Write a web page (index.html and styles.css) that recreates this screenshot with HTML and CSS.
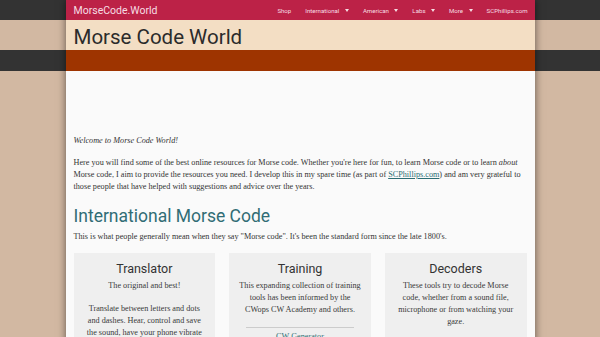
FILE: index.html
```html
<!DOCTYPE html>
<html lang="en">
<head>
    <meta charset="UTF-8">
    <meta name="viewport" content="width=device-width, initial-scale=1.0">
    <title>Morse Code World</title>
    <link rel="stylesheet" href="styles.css">
</head>
<body>

    <div class="page">
        <!-- Top navigation -->
        <nav class="topnav">
            <a class="brand" href="#">MorseCode.World</a>
            <ul class="menu">
                <li><a href="#">Shop</a></li>
                <li><a href="#">International <span class="caret"></span></a></li>
                <li><a href="#">American <span class="caret"></span></a></li>
                <li><a href="#">Labs <span class="caret"></span></a></li>
                <li><a href="#">More <span class="caret"></span></a></li>
                <li><a href="#">SCPhillips.com</a></li>
            </ul>
        </nav>

        <!-- Site title -->
        <header class="masthead">
            <h1>Morse Code World</h1>
        </header>
        <div class="stripe"></div>

        <!-- Main content -->
        <main class="content">
            <div class="ad-space"></div>

            <p><em>Welcome to Morse Code World!</em></p>
            <p>Here you will find some of the best online resources for Morse code. Whether you're here for fun, to learn Morse code or to learn <em>about</em> Morse code, I aim to provide the resources you need. I develop this in my spare time (as part of <a href="#">SCPhillips.com</a>) and am very grateful to those people that have helped with suggestions and advice over the years.</p>

            <h2>International Morse Code</h2>
            <p>This is what people generally mean when they say "Morse code". It's been the standard form since the late 1800's.</p>

            <div class="cards">
                <div class="card">
                    <h3>Translator</h3>
                    <p>The original and best!</p>
                    <p>Translate between letters and dots and dashes. Hear, control and save the sound, have your phone vibrate or your screen flash.</p>
                </div>
                <div class="card">
                    <h3>Training</h3>
                    <p>This expanding collection of training tools has been informed by the CWops CW Academy and others.</p>
                    <hr>
                    <a href="#">CW Generator</a>
                </div>
                <div class="card">
                    <h3>Decoders</h3>
                    <p>These tools try to decode Morse code, whether from a sound file, microphone or from watching your gaze.</p>
                </div>
            </div>
        </main>
    </div>

</body>
</html>
```

FILE: styles.css
```css
/* General Styles */
body, html {
    margin: 0;
    padding: 0;
}

body {
    font-family: "Liberation Serif", "Times New Roman", serif;
    color: #333;
    background: linear-gradient(#333 0, #333 20px, #d2b8a2 20px, #d2b8a2 50px, #333 50px, #333 71px, #d2b8a2 71px);
    overflow: hidden;
}

.page {
    width: 469px;
    margin: 0 auto;
    box-shadow: 0 0 8px rgba(0, 0, 0, 0.55);
}

/* Nav bar */
.topnav {
    height: 20px;
    background: #bc2247;
    display: flex;
    align-items: center;
    justify-content: space-between;
    padding: 0 7px 0 8px;
    font-family: Roboto, sans-serif;
}

.topnav a {
    color: #f6dde3;
    text-decoration: none;
}

.brand {
    font-size: 10.5px;
}

.menu {
    display: flex;
    gap: 14px;
    list-style: none;
    margin: 0;
    padding: 0;
    font-size: 6.1px;
}

.caret {
    display: inline-block;
    width: 0;
    height: 0;
    margin-left: 4px;
    vertical-align: 1px;
    border-left: 2.5px solid transparent;
    border-right: 2.5px solid transparent;
    border-top: 3px solid #f6dde3;
}

/* Title band */
.masthead {
    height: 30px;
    background: #f3dec4;
    padding: 3px 8px 0;
    box-sizing: border-box;
    display: flex;
    align-items: center;
}

.masthead h1 {
    margin: 0;
    font-family: Roboto, sans-serif;
    font-weight: 400;
    font-size: 20.5px;
    color: #2b2b2b;
}

.stripe {
    height: 21px;
    background: #9e3400;
}

/* Content */
.content {
    background: #fafafa;
    padding: 0 8px 30px;
    font-size: 8.2px;
    line-height: 12px;
}

.ad-space {
    height: 64px;
}

.content p {
    margin: 0 0 10px;
}

.content a {
    color: #2d6e74;
}

.content h2 {
    margin: 12px 0 4px;
    font-family: Roboto, sans-serif;
    font-weight: 400;
    font-size: 17.5px;
    line-height: 22px;
    color: #316d75;
}

.cards {
    display: grid;
    grid-template-columns: repeat(3, 1fr);
    gap: 14px;
}

.card {
    background: #efefef;
    text-align: center;
    padding: 8px 9px 10px;
    color: #3a3a3a;
}

.card h3 {
    margin: 0 0 3px;
    font-family: Roboto, sans-serif;
    font-weight: 400;
    font-size: 12.5px;
    line-height: 16px;
    color: #333;
}

.card p {
    margin: 0 0 11px;
}

.card hr {
    border: none;
    border-top: 1px solid #ccc;
    margin: 0 8px 3px;
}
```
